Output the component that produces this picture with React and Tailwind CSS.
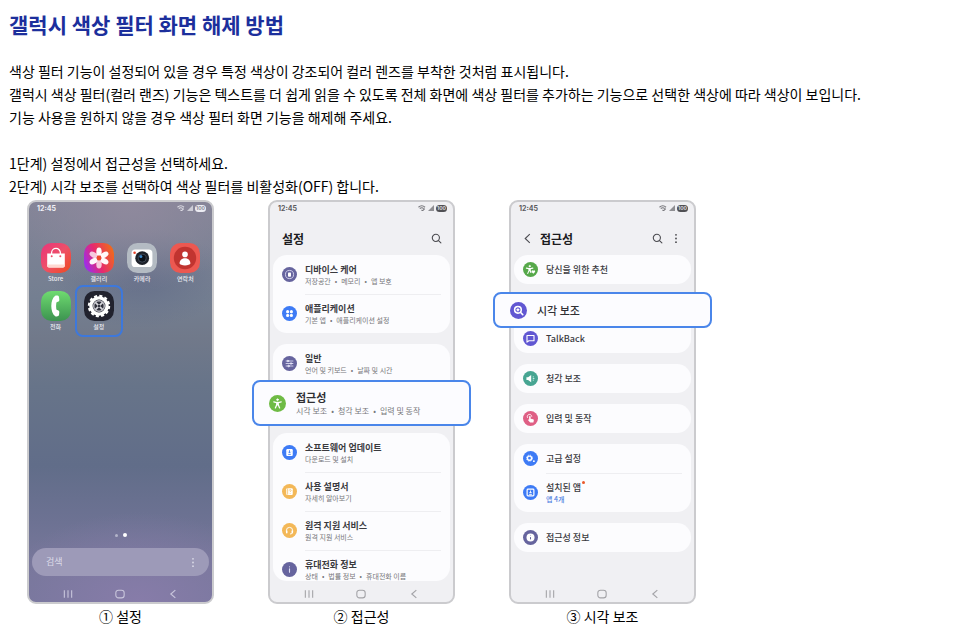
import React from "react";

const paragraphs = [
  "색상 필터 기능이 설정되어 있을 경우 특정 색상이 강조되어 컬러 렌즈를 부착한 것처럼 표시됩니다.",
  "갤럭시 색상 필터(컬러 랜즈) 기능은 텍스트를 더 쉽게 읽을 수 있도록 전체 화면에 색상 필터를 추가하는 기능으로 선택한 색상에 따라 색상이 보입니다.",
  "기능 사용을 원하지 않을 경우 색상 필터 화면 기능을 해제해 주세요.",
];

const steps = [
  "1단계) 설정에서 접근성을 선택하세요.",
  "2단계) 시각 보조를 선택하여 색상 필터를 비활성화(OFF) 합니다.",
];

/* White glyphs drawn inside the coloured circles, on a 24 x 24 grid. */
const glyphs = {
  care: (
    <>
      <circle cx="12" cy="12" r="6.5" fill="none" stroke="#dcdcf2" strokeWidth="1.4" />
      <rect x="9.6" y="8.6" width="4.8" height="6.8" rx="1.2" fill="#fff" />
    </>
  ),
  apps: (
    <g fill="#fff">
      <circle cx="9" cy="9" r="2.5" />
      <circle cx="15" cy="9" r="2.5" />
      <circle cx="9" cy="15" r="2.5" />
      <circle cx="15" cy="15" r="2.5" />
    </g>
  ),
  sliders: (
    <g stroke="#e4e4f6" strokeWidth="1.3" strokeLinecap="round" fill="#e4e4f6">
      <path d="M6.5 8h11M6.5 12h11M6.5 16h11" />
      <circle cx="9.5" cy="8" r="1.3" />
      <circle cx="14.5" cy="12" r="1.3" />
      <circle cx="10.5" cy="16" r="1.3" />
    </g>
  ),
  person: (
    <g fill="#fff" stroke="#fff" strokeWidth="1.8" strokeLinecap="round" strokeLinejoin="round">
      <circle cx="12" cy="6.6" r="1.2" strokeWidth="1" />
      <path d="M6.8 9.8l4 .8h2.4l4-.8M12 11v3M11 11l-.2 3.2L9 18.2M13 11l.2 3.2L15 18.2" fill="none" />
    </g>
  ),
  personHeart: (
    <>
      <g fill="none" stroke="#fff" strokeWidth="1.8" strokeLinecap="round" strokeLinejoin="round">
        <circle cx="10.6" cy="6.6" r="1.2" fill="#fff" strokeWidth="1" />
        <path d="M5.4 9.8l4 .8h2.4l4-.8M10.6 11v3M9.6 11l-.2 3.2-1.8 4M11.6 11v3.4l1 2.4" />
      </g>
      <path d="M16.5 18.6l-2.7-2.7a1.6 1.6 0 012.7-1.8 1.6 1.6 0 012.7 1.8z" fill="#fff" />
    </>
  ),
  update: (
    <>
      <rect x="6.8" y="6.4" width="10.4" height="11.2" rx="1.8" fill="#fff" />
      <path d="M12 8.4v4M10.2 10.9L12 12.7l1.8-1.8M10 15h4" stroke="#3e7bf5" strokeWidth="1.4" fill="none" />
    </>
  ),
  manual: (
    <>
      <rect x="6.8" y="6.6" width="10.4" height="10.8" rx="1.6" fill="#fff" />
      <path d="M9 7v10M11.4 10.2c.2-1.6 3.4-1.6 3.2.2-.1 1-1.5 1-1.5 2.3M13.1 14.4v1" stroke="#f0b44d" strokeWidth="1.1" fill="none" />
    </>
  ),
  headset: (
    <g fill="none" stroke="#fff" strokeWidth="1.5" strokeLinecap="round">
      <path d="M7 13.5V12a5 5 0 0110 0v1.5M17 14.5c0 2-1.5 3-3.6 3" />
      <path d="M7.6 12.6v3M16.4 12.6v3" strokeWidth="2.4" />
    </g>
  ),
  info: (
    <g stroke="#dcdcf2" strokeWidth="1.8" strokeLinecap="round">
      <path d="M12 11v5.4M12 7.6v.1" />
    </g>
  ),
  zoomIn: (
    <g fill="none" stroke="#fff" strokeWidth="2.2" strokeLinecap="round">
      <circle cx="11.2" cy="11" r="4.7" />
      <path d="M15 14.8l3 3M11.2 9.8v2.4M10 11h2.4" />
    </g>
  ),
  talk: (
    <path d="M6.4 7.2h11.2v8.4H9.4l-3 2.2z" fill="none" stroke="#fff" strokeWidth="1.8" strokeLinejoin="round" />
  ),
  sound: (
    <>
      <path d="M5.500 9.800h2.600l5-3.600v11.600l-5-3.600H5.500z" fill="#fff" />
      <path d="M15.600 9.400h1.800M15.600 12h2.600M15.600 14.600h1.800" stroke="#c9eee6" strokeWidth="1.500" />
    </>
  ),
  touch: (
    <>
      <path d="M7.4 11a3.6 3.6 0 116.6-1.8" fill="none" stroke="#fff" strokeWidth="1.3" />
      <path d="M9.8 9.2a1.2 1.2 0 012.4 0v3l4 .9c1 .3 1.3 1 1.1 1.9l-.7 3.2h-5.2l-3.2-3.6c-.5-.8.3-1.5 1.6-.8z" fill="#fff" />
    </>
  ),
  gears: (
    <>
      <circle cx="10.4" cy="11.4" r="3.3" fill="none" stroke="#fff" strokeWidth="2.2" />
      <circle cx="10.4" cy="11.4" r="4.8" fill="none" stroke="#fff" strokeWidth="1.3" strokeDasharray="2.2 1.57" />
      <circle cx="17.4" cy="16.2" r="1.5" fill="#fff" />
    </>
  ),
  installed: (
    <>
      <rect x="6.600" y="6.600" width="10.800" height="10.800" rx="1.400" fill="none" stroke="#fff" strokeWidth="1.900" />
      <path d="M12 8.8v4M10.2 11.2l1.8 1.8 1.8-1.8M9.8 15h4.4" stroke="#fff" strokeWidth="1.4" fill="none" />
    </>
  ),
  infoRing: (
    <>
      <circle cx="12" cy="12" r="6.4" fill="#fff" />
      <path d="M12 11.4v3.6M12 8.8v.6" stroke="#66649e" strokeWidth="1.6" />
    </>
  ),
};

function Badge({ glyph, color, large }) {
  return (
    <svg viewBox="0 0 24 24" aria-hidden="true" className={large ? "size-[17px] shrink-0" : "size-[15px] shrink-0"}>
      <circle cx="12" cy="12" r="12" fill={color} />
      {glyphs[glyph]}
    </svg>
  );
}

function StatusBar({ light }) {
  const ink = light ? "#f1f1f6" : "#5b5b60";
  return (
    <div className={`flex h-3 items-center justify-between pl-2 pr-1.5 ${light ? "text-[#f1f1f6]" : "text-[#5b5b60]"}`}>
      <span className="font-[Inter,sans-serif] text-[7px] font-bold leading-none">12:45</span>
      <span className="flex items-center gap-0.5">
        <svg viewBox="0 0 16 12" className="h-[6px] w-2" aria-hidden="true">
          <g fill="none" stroke={ink} strokeWidth="2.2" opacity="0.8">
            <path d="M1 4.5c4-4 9-4 13 0M3.6 7.2c2.4-2.4 5.4-2.4 7.8 0" />
            <path d="M7 9.6l2 2 4.5-4.5" />
          </g>
        </svg>
        <svg viewBox="0 0 12 12" className="size-[6px]" aria-hidden="true">
          <path d="M0 12L12 0v12z" fill={ink} opacity="0.65" />
        </svg>
        <span
          className={`flex h-[7px] w-[11px] items-center justify-center rounded-full font-[Inter,sans-serif] text-[5px] font-bold leading-none ${
            light ? "bg-[#ececf2] text-[#8a8a98]" : "bg-[#505054] text-[#dcdcdf]"
          }`}
        >
          100
        </span>
      </span>
    </div>
  );
}

function NavBar({ light }) {
  return (
    <nav
      aria-label="내비게이션"
      className={`grid h-[21px] grid-cols-3 px-[13px] pt-1 ${light ? "text-[#c9c6dc]" : "text-[#a3a3a7]"}`}
    >
      <button type="button" aria-label="최근 앱" className="flex items-center justify-center">
        <svg viewBox="0 0 12 12" className="size-[10px]" fill="none" stroke="currentColor" strokeWidth="1.3">
          <path d="M1.6 1.5v9M6 1.5v9M10.4 1.5v9" />
        </svg>
      </button>
      <button type="button" aria-label="홈" className="flex items-center justify-center">
        <svg viewBox="0 0 12 12" className="size-[10px]" fill="none" stroke="currentColor" strokeWidth="1.3">
          <rect x="1" y="1.4" width="10" height="9.2" rx="3.2" />
        </svg>
      </button>
      <button type="button" aria-label="뒤로" className="flex items-center justify-center">
        <svg viewBox="0 0 12 12" className="size-[10px]" fill="none" stroke="currentColor" strokeWidth="1.4">
          <path d="M8.8 1.4L3.4 6l5.4 4.6" />
        </svg>
      </button>
    </nav>
  );
}

function SearchIcon() {
  return (
    <svg viewBox="0 0 12 12" className="size-[11px]" fill="none" stroke="#4b4b50" strokeWidth="1.2" strokeLinecap="round">
      <circle cx="5.3" cy="5.3" r="3.9" />
      <path d="M8.2 8.2l2.6 2.6" />
    </svg>
  );
}

function MoreIcon({ color }) {
  return (
    <svg viewBox="0 0 4 12" className="h-[11px] w-1" fill={color}>
      <circle cx="2" cy="2" r="1" />
      <circle cx="2" cy="6" r="1" />
      <circle cx="2" cy="10" r="1" />
    </svg>
  );
}

/* Secondary line: its parts are separated by spaced bullets. */
function Sub({ parts, className }) {
  return (
    <span className={className}>
      {parts.map((part, i) => (
        <React.Fragment key={part}>
          {i > 0 && <span className="mx-1">•</span>}
          {part}
        </React.Fragment>
      ))}
    </span>
  );
}

function Row({ item, divided, compact, medium }) {
  const height = compact ? "h-[29px]" : "h-[39px]";
  if (item.highlight) {
    return (
      <li className={`relative ${height}`}>
        <button
          type="button"
          className="absolute -inset-x-[21px] -bottom-1 -top-[3px] z-10 flex items-center gap-2.5 rounded-[8px] border-2 border-[#4a86ea] bg-[#fcfcff] pl-[15px] text-left"
        >
          <Badge glyph={item.glyph} color={item.color} large />
          <span className="flex flex-col">
            <span className={`text-[11px] leading-[15px] text-[#303034] ${compact ? "font-medium" : "font-bold"}`}>{item.title}</span>
            {item.sub && <Sub parts={item.sub} className="text-[8px] leading-3 text-[#77777b]" />}
          </span>
        </button>
      </li>
    );
  }
  return (
    <li>
      <button type="button" className={`flex w-full items-center gap-2 px-[9px] text-left ${height}`}>
        <Badge glyph={item.glyph} color={item.color} />
        <span className={`flex flex-1 flex-col justify-center self-stretch ${divided ? "border-t border-[#eeeef1]" : ""}`}>
          <span className={`text-[9px] leading-[13px] text-[#3a3a3e] ${compact || medium ? "font-medium" : "font-bold"}`}>
            <span className="relative">
              {item.title}
              {item.dot && <i className="absolute -right-1 top-0 size-[3px] rounded-full bg-[#e8592b]" />}
            </span>
          </span>
          {item.sub && (
            <Sub
              parts={item.sub}
              className={`text-[7px] leading-[11px] ${item.blue ? "font-medium text-[#4f7fe0]" : "text-[#77777b]"}`}
            />
          )}
        </span>
      </button>
    </li>
  );
}

const cardStyle = "mx-[3px] rounded-[14px] bg-[#fcfcfe]";

function Phone({ caption, children, wallpaper }) {
  return (
    <figure className="flex flex-col px-[27px]">
      <div
        className={`flex flex-1 flex-col rounded-[9px] border-2 border-[#cbcbce] ${
          wallpaper
            ? "bg-[radial-gradient(140px_90px_at_60%_100%,#877ca9_0%,#877ca900_100%),radial-gradient(120px_90px_at_55%_0%,#8f899d_0%,#8f899d00_100%),radial-gradient(90px_50px_at_60%_19%,#66708a_0%,#66708a00_100%),linear-gradient(180deg,#838497_0%,#747f91_24%,#71798a_34%,#677489_46%,#616d89_66%,#6d7293_80%,#77779a_90%,#77779c_100%)]"
            : "bg-[#f0f0f3]"
        }`}
      >
        {children}
      </div>
      <figcaption className="text-center text-[14px] leading-6 text-black">{caption}</figcaption>
    </figure>
  );
}

const appIcons = {
  store: (
    <>
      <defs>
        <linearGradient id="store" x1="0" y1="0" x2="1" y2="1">
          <stop offset="0" stopColor="#e9347b" />
          <stop offset="0.5" stopColor="#ee5068" />
          <stop offset="1" stopColor="#ee4a1c" />
        </linearGradient>
      </defs>
      <rect width="30" height="30" rx="10.5" fill="url(#store)" />
      <path d="M10.6 12V9.8a4.4 4.4 0 018.8 0V12" fill="none" stroke="#fff" strokeWidth="1.3" />
      <path d="M6.2 10.5h17.6v12.3a1.8 1.8 0 01-1.8 1.8H8a1.8 1.8 0 01-1.8-1.8z" fill="#fff" />
      <path d="M6.2 21.5h17.6v1.3a1.8 1.8 0 01-1.8 1.8H8a1.8 1.8 0 01-1.8-1.8z" fill="#ffd9d2" />
      <circle cx="10.7" cy="13.3" r="1" fill="#ee5068" />
      <circle cx="19.3" cy="13.3" r="1" fill="#ee5068" />
    </>
  ),
  gallery: (
    <>
      <defs>
        <linearGradient id="gallery" x1="0" y1="0.7" x2="1" y2="0.3">
          <stop offset="0" stopColor="#9b2df0" />
          <stop offset="0.45" stopColor="#e62a6e" />
          <stop offset="1" stopColor="#f06a1c" />
        </linearGradient>
      </defs>
      <rect width="30" height="30" rx="10.5" fill="url(#gallery)" />
      <g fill="#fff">
        {[0, 60, 120, 180, 240, 300].map((a) => (
          <ellipse key={a} cx="15" cy="8.7" rx="2.7" ry="4.3" opacity={a === 180 || a === 300 ? 0.75 : 0.97} transform={`rotate(${a} 15 15)`} />
        ))}
      </g>
      <circle cx="15" cy="15" r="2.4" fill="#ee4a2c" />
    </>
  ),
  camera: (
    <>
      <rect width="30" height="30" rx="10.5" fill="#b4bbc3" />
      <rect x="4.6" y="6.4" width="20.8" height="17.6" rx="3.6" fill="#fff" />
      <circle cx="7.6" cy="9.8" r="1.3" fill="#e8432c" />
      <circle cx="15.2" cy="15.2" r="6.9" fill="#1d2129" />
      <circle cx="15.2" cy="15.2" r="4" fill="#0b1018" stroke="#4a5666" strokeWidth="0.8" />
      <circle cx="13.9" cy="13.6" r="1.5" fill="#3d87c9" />
    </>
  ),
  contacts: (
    <>
      <rect width="30" height="30" rx="10.5" fill="#ec5851" />
      <circle cx="15" cy="15" r="11.2" fill="#c13430" />
      <circle cx="15" cy="11.4" r="2.8" fill="#fff" />
      <path d="M9.6 20.6c0-7 10.8-7 10.8 0 0 2.4-10.8 2.4-10.8 0z" fill="#fff" />
    </>
  ),
  phone: (
    <>
      <defs>
        <linearGradient id="call" x1="0" y1="0" x2="0" y2="1">
          <stop offset="0" stopColor="#6fdb70" />
          <stop offset="1" stopColor="#3c9350" />
        </linearGradient>
      </defs>
      <rect width="30" height="30" rx="10.5" fill="url(#call)" />
      <path
        d="M14.2 4.8c1.600-.5 3.600-.1 3.800 1.200l.3 2.700c.1 1.200-.5 1.800-1.500 2-.9.200-1.400.5-1.500 1.300-.3 2-.3 4 0 6 .1.800.600 1.100 1.500 1.300 1 .2 1.600.8 1.500 2l-.3 2.700c-.2 1.300-2.200 1.700-3.800 1.200-5.200-3.400-5.200-17 0-20.400z"
        fill="#fff"
      />
    </>
  ),
  settings: (
    <>
      <rect width="30" height="30" rx="10.5" fill="#21222e" />
      <circle cx="15" cy="15" r="8.100" fill="none" stroke="#fff" strokeWidth="3.400" />
      <circle cx="15" cy="15" r="10.200" fill="none" stroke="#fff" strokeWidth="2" strokeDasharray="3.100 2.240" />
      <circle cx="15" cy="15" r="5.300" fill="#30313c" stroke="#b9b9c2" strokeWidth="1.400" />
      <path d="M11.400 11.400l7.200 7.200M18.600 11.400l-7.200 7.200" stroke="#d6d6dc" strokeWidth="1.700" />
      <circle cx="15" cy="15" r="1.200" fill="#30313c" />
    </>
  ),
};

const apps = [
  { id: "store", label: "Store" },
  { id: "gallery", label: "갤러리" },
  { id: "camera", label: "카메라" },
  { id: "contacts", label: "연락처" },
  { id: "phone", label: "전화" },
  { id: "settings", label: "설정", highlight: true },
];

function HomeScreen() {
  return (
    <>
      <StatusBar light />
      <div className="mt-[29px] grid grid-cols-4 gap-y-1.5 px-[5px]">
        {apps.map((app) => (
          <button key={app.id} type="button" className="relative flex flex-col items-center">
            <svg viewBox="0 0 30 30" className="size-[30px]" aria-hidden="true">
              {appIcons[app.id]}
            </svg>
            <span className="text-[6px] font-medium leading-3 text-[#ececf2]">{app.label}</span>
            {app.highlight && <span className="absolute -inset-x-0.5 -bottom-1 -top-1.5 rounded-[8px] border-2 border-[#3d78dc]" />}
          </button>
        ))}
      </div>
      <div className="flex-1" />
      <div className="flex items-center justify-center gap-[5px] pb-[11px]">
        <span className="size-[3px] rounded-full bg-[#b3b4c9]" />
        <span className="size-1 rounded-full bg-white" />
      </div>
      <div className="mx-[3px] mb-[5px] flex h-7 items-center rounded-full bg-[#9d9ab8] px-3.5">
        <input
          type="search"
          aria-label="검색"
          placeholder="검색"
          className="min-w-0 flex-1 bg-transparent text-[9px] leading-4 outline-none placeholder:text-[#dcdbe8]"
        />
        <button type="button" aria-label="더보기">
          <MoreIcon color="#d9d8e6" />
        </button>
      </div>
      <NavBar light />
    </>
  );
}

const settingsGroups = [
  [
    { title: "디바이스 케어", sub: ["저장공간", "메모리", "앱 보호"], glyph: "care", color: "#66649e" },
    { title: "애플리케이션", sub: ["기본 앱", "애플리케이션 설정"], glyph: "apps", color: "#3e7bf5" },
  ],
  [
    { title: "일반", sub: ["언어 및 키보드", "날짜 및 시간"], glyph: "sliders", color: "#66649e" },
    { title: "접근성", sub: ["시각 보조", "청각 보조", "입력 및 동작"], glyph: "person", color: "#6fbb45", highlight: true },
  ],
  [
    { title: "소프트웨어 업데이트", sub: ["다운로드 및 설치"], glyph: "update", color: "#3e7bf5" },
    { title: "사용 설명서", sub: ["자세히 알아보기"], glyph: "manual", color: "#f3b858" },
    { title: "원격 지원 서비스", sub: ["원격 지원 서비스"], glyph: "headset", color: "#f3b858" },
    { title: "휴대전화 정보", sub: ["상태", "법률 정보", "휴대전화 이름"], glyph: "info", color: "#66649e" },
  ],
];

function SettingsScreen() {
  return (
    <>
      <StatusBar />
      <header className="flex h-[41px] items-center justify-between pl-3 pr-[11px] pt-2">
        <h2 className="text-[12px] font-bold leading-4 text-[#1c1c1f]">설정</h2>
        <button type="button" aria-label="검색">
          <SearchIcon />
        </button>
      </header>
      <div className="flex flex-col gap-[11px]">
        {settingsGroups.map((group, i) => (
          <ul key={i} className={`${cardStyle} ${i === 2 ? "h-[148px] overflow-hidden" : ""}`}>
            {group.map((item, j) => (
              <Row key={item.title} item={item} divided={j > 0} />
            ))}
          </ul>
        ))}
      </div>
      <NavBar />
    </>
  );
}

function AccessibilityScreen() {
  return (
    <>
      <StatusBar />
      <header className="flex h-[41px] items-center pl-3 pr-4 pt-2">
        <button type="button" aria-label="뒤로" className="mr-1.5">
          <svg viewBox="0 0 12 12" className="size-[11px]" fill="none" stroke="#4b4b50" strokeWidth="1.2">
            <path d="M7.400 1.200L2.400 6l5 4.800" />
          </svg>
        </button>
        <h2 className="flex-1 text-[12px] font-bold leading-4 text-[#1c1c1f]">접근성</h2>
        <button type="button" aria-label="검색" className="mr-[11px]">
          <SearchIcon />
        </button>
        <button type="button" aria-label="더보기">
          <MoreIcon color="#4b4b50" />
        </button>
      </header>
      <div className="flex flex-col gap-[11px]">
        <ul className={cardStyle}>
          <Row compact item={{ title: "당신을 위한 추천", glyph: "personHeart", color: "#56a84a" }} />
        </ul>
        <ul className={cardStyle}>
          <Row compact item={{ title: "시각 보조", glyph: "zoomIn", color: "#6157d2", highlight: true }} />
          <Row compact item={{ title: "TalkBack", glyph: "talk", color: "#6157d2" }} />
        </ul>
        <ul className={cardStyle}>
          <Row compact item={{ title: "청각 보조", glyph: "sound", color: "#47a592" }} />
        </ul>
        <ul className={cardStyle}>
          <Row compact item={{ title: "입력 및 동작", glyph: "touch", color: "#df5f85" }} />
        </ul>
        <ul className={cardStyle}>
          <Row compact item={{ title: "고급 설정", glyph: "gears", color: "#3e7bf5" }} />
          <Row divided medium item={{ title: "설치된 앱", sub: ["앱 4개"], glyph: "installed", color: "#3e7bf5", dot: true, blue: true }} />
        </ul>
        <ul className={cardStyle}>
          <Row compact item={{ title: "접근성 정보", glyph: "infoRing", color: "#66649e" }} />
        </ul>
      </div>
      <div className="flex-1" />
      <NavBar />
    </>
  );
}

export default function App() {
  return (
    <main className="bg-white pt-2 font-['Noto_Sans_CJK_KR',sans-serif] text-black">
      <div className="px-[9px]">
        <h1 className="mb-5 text-[21px] font-bold leading-8 text-[#1c2f9c]">갤럭시 색상 필터 화면 해제 방법</h1>
        <div className="mb-[23px] text-[14px] leading-[23px]">
          {paragraphs.map((text) => (
            <p key={text}>{text}</p>
          ))}
        </div>
        <div className="mb-0.5 text-[14px] leading-[23px]">
          {steps.map((text) => (
            <p key={text}>{text}</p>
          ))}
        </div>
      </div>
      <section className="grid max-w-[723px] grid-cols-3">
        <Phone caption="① 설정" wallpaper>
          <HomeScreen />
        </Phone>
        <Phone caption="② 접근성">
          <SettingsScreen />
        </Phone>
        <Phone caption="③ 시각 보조">
          <AccessibilityScreen />
        </Phone>
      </section>
    </main>
  );
}
